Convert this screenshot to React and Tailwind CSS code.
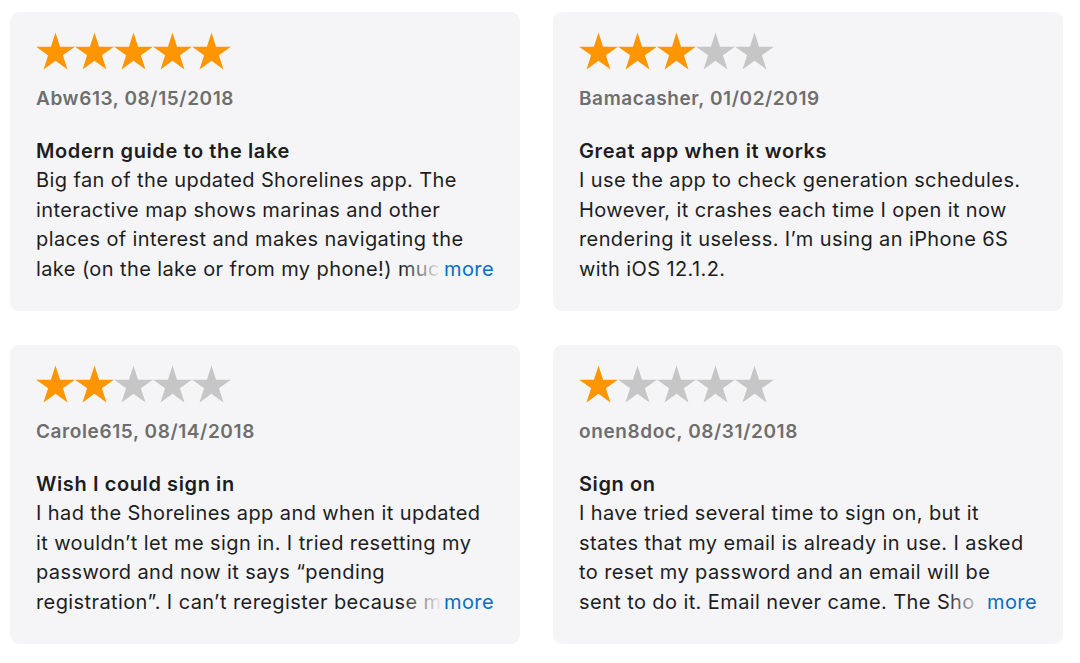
import React from "react";

const reviews = [
  {
    rating: 5,
    author: "Abw613, 08/15/2018",
    title: "Modern guide to the lake",
    body: "Big fan of the updated Shorelines app. The interactive map shows marinas and other places of interest and makes navigating the lake (on the lake or from my phone!) much easier. Love the new look and the fishing reports.",
    more: true,
  },
  {
    rating: 3,
    author: "Bamacasher, 01/02/2019",
    title: "Great app when it works",
    body: "I use the app to check generation schedules. However, it crashes each time I open it now rendering it useless. I\u2019m using an iPhone 6S with iOS 12.1.2.",
    more: false,
  },
  {
    rating: 2,
    author: "Carole615, 08/14/2018",
    title: "Wish I could sign in",
    body: "I had the Shorelines app and when it updated it wouldn\u2019t let me sign in. I tried resetting my password and now it says \u201cpending registration\u201d. I can\u2019t reregister because my email is already in use.",
    more: true,
  },
  {
    rating: 1,
    author: "onen8doc, 08/31/2018",
    title: "Sign on",
    body: "I have tried several time to sign on, but it states that my email is already in use. I asked to reset my password and an email will be sent to do it. Email never came. The Sho\u200brelines app used to work great.",
    more: true,
  },
];

function Star({ filled }) {
  return (
    <svg width="39" height="39" viewBox="1 1 22 22" className="shrink-0">
      <polygon
        points="12,1.3 14.58,9.25 22.94,9.25 16.17,14.16 18.76,22.1 12,17.19 5.24,22.1 7.83,14.16 1.06,9.25 9.42,9.25"
        fill={filled ? "#ff9500" : "#c6c6c6"}
      />
    </svg>
  );
}

function ReviewCard({ review }) {
  return (
    <div className="bg-[#f5f5f7] rounded-[9px] px-[26px] pt-[20px] pb-[27px]">
      {/* stars */}
      <div className="flex">
        {[1, 2, 3, 4, 5].map((n) => (
          <Star key={n} filled={n <= review.rating} />
        ))}
      </div>
      <div className="mt-[16px] text-[19px] leading-[24px] font-semibold tracking-[0.6px] text-[#6e6e6e]">
        {review.author}
      </div>
      <div className="mt-[25.5px] text-[20px] leading-[29.5px] font-semibold tracking-[0.6px] text-[#1d1d1f]">
        {review.title}
      </div>
      <div className="relative">
        <p className="text-[20px] leading-[29.5px] tracking-[0.4px] text-[#1d1d1f] overflow-hidden h-[118px]">
          {review.body}
        </p>
        {review.more && (
          <div className="absolute right-0 bottom-0 flex text-[20px] leading-[29.5px] tracking-[0.4px]">
            <span className="w-[40px] bg-gradient-to-r from-[#f5f5f7]/0 to-[#f5f5f7]"></span>
            <span className="bg-[#f5f5f7] text-[#0070c9] pl-[2px]">more</span>
          </div>
        )}
      </div>
    </div>
  );
}

export default function App() {
  return (
    <div
      className="w-[1080px] h-[663px] bg-white pl-[10px] pr-[17px] pt-[12px]"
      style={{ fontFamily: "Inter, 'Noto Sans', sans-serif" }}
    >
      <div className="grid grid-cols-2 gap-x-[33px] gap-y-[34px]">
        {reviews.map((r) => (
          <ReviewCard key={r.author} review={r} />
        ))}
      </div>
    </div>
  );
}
